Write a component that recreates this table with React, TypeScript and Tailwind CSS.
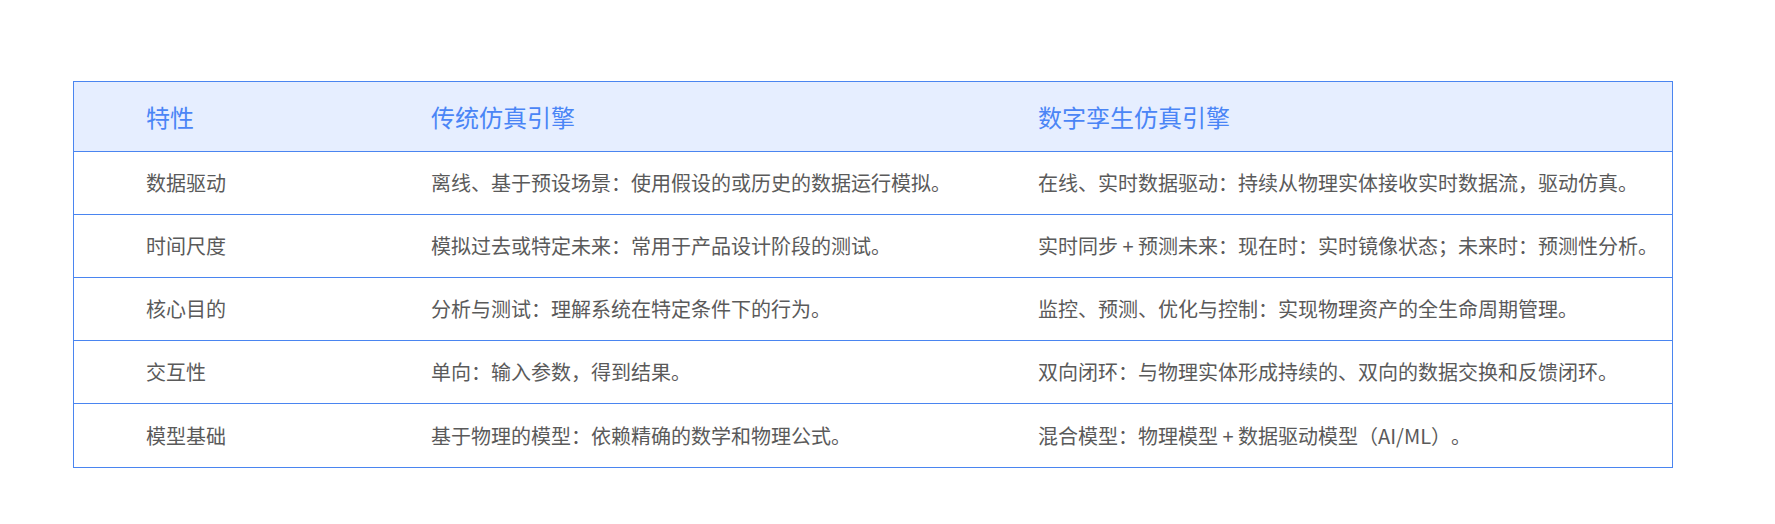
import React from "react";

const rows: [string, string, string][] = [
  ["数据驱动", "离线、基于预设场景：使用假设的或历史的数据运行模拟。", "在线、实时数据驱动：持续从物理实体接收实时数据流，驱动仿真。"],
  ["时间尺度", "模拟过去或特定未来：常用于产品设计阶段的测试。", "实时同步 + 预测未来：现在时：实时镜像状态；未来时：预测性分析。"],
  ["核心目的", "分析与测试：理解系统在特定条件下的行为。", "监控、预测、优化与控制：实现物理资产的全生命周期管理。"],
  ["交互性", "单向：输入参数，得到结果。", "双向闭环：与物理实体形成持续的、双向的数据交换和反馈闭环。"],
  ["模型基础", "基于物理的模型：依赖精确的数学和物理公式。", "混合模型：物理模型 + 数据驱动模型（AI/ML）。"],
];

export default function App() {
  return (
    <div
      className="w-[1775px] h-[524px] bg-white pt-[81px] pl-[73px] [text-spacing-trim:space-all]"
      style={{ fontFamily: '"Noto Sans CJK SC", "Noto Sans", sans-serif' }}
    >
      <div className="w-[1600px] border border-[#4a85f0]">
        <div className="grid grid-cols-[285px_607px_1fr] h-[70px] items-center bg-[#e6eeff] border-b border-[#4a85f0] text-[24px] text-[#4a85f6]">
          <div className="pl-[72px]">特性</div>
          <div className="pl-[72px]">传统仿真引擎</div>
          <div className="pl-[72px]">数字孪生仿真引擎</div>
        </div>
        {rows.map((r, i) => (
          <div
            key={i}
            className={`grid grid-cols-[285px_607px_1fr] h-[63px] items-center text-[20px] text-[#5a5a5a] ${
              i < rows.length - 1 ? "border-b border-[#4a85f0]" : ""
            }`}
          >
            <div className="pl-[72px]">{r[0]}</div>
            <div className="pl-[72px]">{r[1]}</div>
            <div className="pl-[72px]">{r[2]}</div>
          </div>
        ))}
      </div>
    </div>
  );
}
